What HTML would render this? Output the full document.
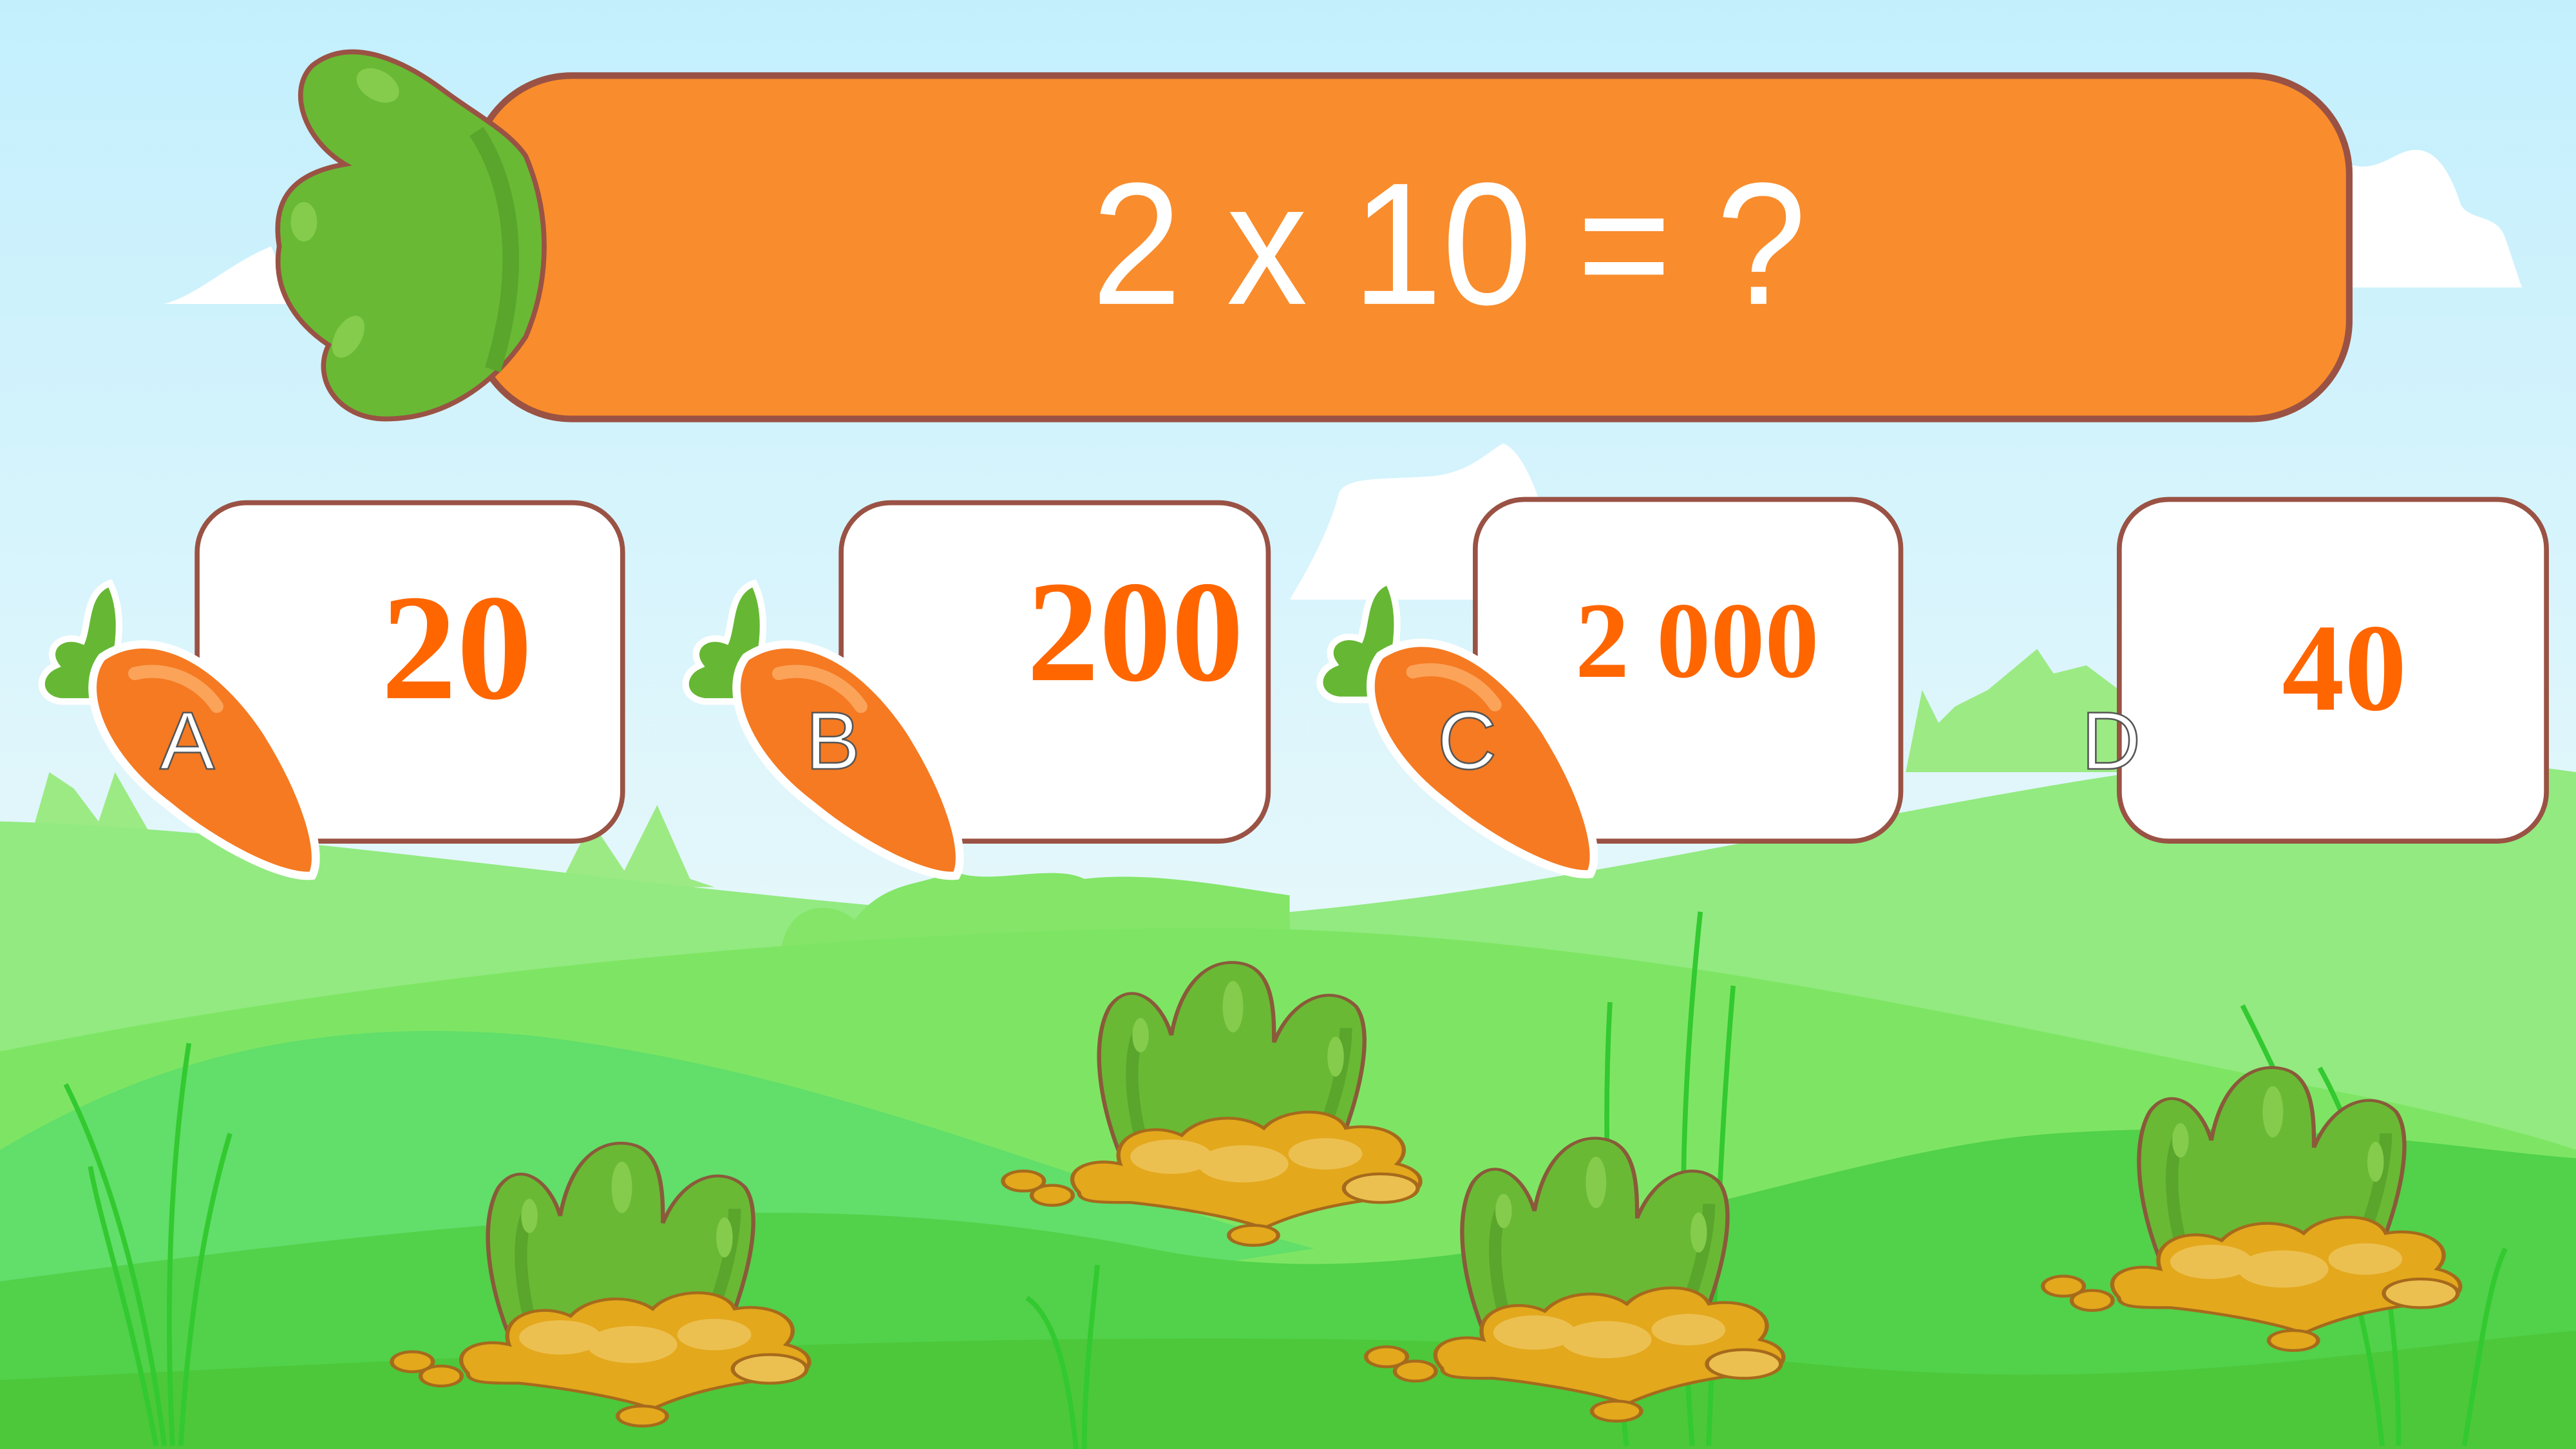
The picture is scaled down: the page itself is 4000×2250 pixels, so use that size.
<!DOCTYPE html>
<html><head><meta charset="utf-8"><style>
html,body{margin:0;padding:0;width:4000px;height:2250px;overflow:hidden;}
svg{display:block;}
</style></head><body>
<svg width="4000" height="2250" viewBox="0 0 1568 882" xmlns="http://www.w3.org/2000/svg">
<defs>
<linearGradient id="sky" x1="0" y1="0" x2="0" y2="1">
<stop offset="0" stop-color="#c3effd"/><stop offset="0.6" stop-color="#e3f7fb"/><stop offset="1" stop-color="#f0fbfa"/>
</linearGradient>
<g id="bush">
<path d="M-60,45 C-75,0 -80,-50 -70,-75 C-60,-95 -45,-80 -40,-55 C-35,-95 -20,-110 -5,-105 C10,-100 10,-70 10,-50 C20,-85 40,-90 50,-75 C60,-55 50,0 35,45 Z" fill="#69b934" stroke="#8a5a3a" stroke-width="2"/>
<path d="M-50,40 C-60,0 -62,-40 -55,-60 M25,40 C40,0 45,-40 45,-60" stroke="#5aa52b" stroke-width="6" fill="none"/>
<ellipse cx="-10" cy="-75" rx="5" ry="18" fill="#85cc4c"/>
<ellipse cx="-55" cy="-55" rx="4" ry="12" fill="#85cc4c"/>
<ellipse cx="40" cy="-40" rx="4" ry="14" fill="#85cc4c"/>
<path d="M-85,55 C-95,40 -80,30 -65,35 C-70,15 -50,5 -35,15 C-25,0 -5,0 5,10 C15,-5 40,-5 45,10 C65,5 80,20 70,35 C85,40 85,55 70,58 C40,62 20,70 5,80 C-10,72 -40,65 -60,62 C-75,62 -85,62 -85,55 Z" fill="#e3a81c" stroke="#a66a1c" stroke-width="2"/>
<ellipse cx="-40" cy="30" rx="20" ry="12" fill="#ecc050"/><ellipse cx="-5" cy="35" rx="22" ry="13" fill="#ecc050"/><ellipse cx="35" cy="28" rx="18" ry="11" fill="#ecc050"/>
<ellipse cx="62" cy="52" rx="18" ry="10" fill="#ecc050" stroke="#a66a1c" stroke-width="2"/>
<ellipse cx="-112" cy="47" rx="10" ry="7" fill="#e3a81c" stroke="#a66a1c" stroke-width="2"/>
<ellipse cx="-98" cy="57" rx="10" ry="7" fill="#e3a81c" stroke="#a66a1c" stroke-width="2"/>
<ellipse cx="0" cy="85" rx="12" ry="7" fill="#e3a81c" stroke="#a66a1c" stroke-width="2"/>
</g>
<g id="carrot">
<path d="M45,0 C30,5 32,25 28,35 C15,30 5,40 12,50 C0,55 0,70 15,72 L40,72 C50,50 55,20 45,0 Z" fill="#66b834" stroke="#fff" stroke-width="4"/>
<path d="M40,45 C70,25 110,45 140,90 C165,130 175,165 168,178 C150,180 110,160 80,135 C40,105 25,65 40,45 Z" fill="#f57a22" stroke="#fff" stroke-width="5"/>
<path d="M60,55 C80,50 100,60 110,75" stroke="#fca35a" stroke-width="8" fill="none" stroke-linecap="round"/>
</g>
</defs>
<rect width="1568" height="882" fill="url(#sky)"/>
<path d="M1430,100 C1445,105 1455,95 1465,92 C1480,88 1490,100 1498,125 C1505,135 1520,130 1525,145 L1535,175 L1430,175 Z" fill="#fff"/>
<path d="M100,185 C120,180 140,160 165,150 L180,185 Z" fill="#fff"/>
<path d="M785,365 C800,340 810,320 815,300 C820,290 840,292 870,290 C895,288 905,275 915,270 C930,275 945,320 950,365 Z" fill="#fff"/>
<path d="M20,505 L30,470 L45,480 L60,500 L70,470 L90,505 Z M340,540 L360,500 L380,530 L400,490 L420,535 L435,540 Z M1160,470 L1170,420 L1180,440 L1190,430 L1210,420 L1240,395 L1250,410 L1270,405 L1290,420 L1290,470 Z" fill="#9cea84"/>
<path d="M0,500 C200,505 500,560 700,560 C900,555 1100,500 1300,470 C1400,455 1500,460 1568,470 L1568,882 L0,882 Z" fill="#92ea80"/>
<path d="M475,580 C480,545 510,550 520,560 C540,535 560,540 580,530 C600,540 640,525 660,535 C700,530 750,540 785,545 L785,600 L475,600 Z" fill="#84e568"/>
<path d="M0,640 C200,600 450,570 700,565 C950,560 1200,620 1400,660 C1480,675 1540,690 1568,700 L1568,882 L0,882 Z" fill="#7ee564"/>
<path d="M0,700 C100,640 200,620 320,630 C500,650 650,720 800,760 L0,882 Z" fill="#62de6a"/>
<path d="M0,780 C300,740 500,720 700,760 C900,800 1100,700 1250,690 C1400,680 1500,700 1568,705 L1568,882 L0,882 Z" fill="#52d14a"/>
<path d="M0,840 C400,820 800,800 1100,830 C1300,850 1450,820 1568,810 L1568,882 L0,882 Z" fill="#4cc83a"/>
<g stroke="#33c930" stroke-width="3" fill="none">
<path d="M100,880 C90,800 70,720 40,660"/><path d="M105,880 C100,780 105,700 115,635"/><path d="M95,880 C80,800 60,740 55,710"/>
<path d="M110,880 C115,800 125,740 140,690"/>
<path d="M655,882 C650,830 640,800 625,790"/><path d="M660,882 C660,840 665,800 668,770"/>
<path d="M1030,880 C1020,750 1025,650 1035,555"/><path d="M1040,880 C1045,760 1048,680 1055,600"/><path d="M990,880 C980,780 975,700 980,610"/>
<path d="M1450,880 C1440,780 1410,700 1365,612"/><path d="M1460,880 C1460,780 1440,700 1412,650"/><path d="M1500,880 C1510,820 1515,780 1525,760"/>
</g>
<use href="#bush" transform="translate(763,678) scale(1.25,0.87)"/>
<use href="#bush" transform="translate(391,788) scale(1.25,0.87)"/>
<use href="#bush" transform="translate(984,785) scale(1.25,0.87)"/>
<use href="#bush" transform="translate(1396,742) scale(1.25,0.87)"/>
<rect x="288" y="46" width="1142" height="209" rx="60" fill="#f98c2c" stroke="#9a5244" stroke-width="4"/>
<path d="M190,40 C215,20 250,40 270,55 C290,70 310,80 320,95 C335,130 335,170 320,205 C300,235 270,255 235,255 C205,255 190,230 200,210 C185,200 165,180 170,150 C165,120 180,105 210,100 C185,85 175,55 190,40 Z" fill="#69b934" stroke="#9a5244" stroke-width="3"/>
<path d="M290,80 C310,110 320,160 300,225" stroke="#5aa52b" stroke-width="10" fill="none"/>
<ellipse cx="230" cy="52" rx="14" ry="9" fill="#85cc4c" transform="rotate(30 230 52)"/>
<ellipse cx="185" cy="135" rx="8" ry="12" fill="#85cc4c"/>
<ellipse cx="212" cy="205" rx="8" ry="14" fill="#85cc4c" transform="rotate(30 212 205)"/>
<text x="882" y="185" text-anchor="middle" font-family="'Liberation Sans',sans-serif" font-size="106" fill="#fff" textLength="435" lengthAdjust="spacingAndGlyphs">2 x 10 = ?</text>
<g fill="#fff" stroke="#9a5244" stroke-width="3">
<rect x="120" y="306" width="259" height="206" rx="30"/>
<rect x="512" y="306" width="260" height="206" rx="30"/>
<rect x="898" y="304" width="259" height="208" rx="30"/>
<rect x="1290" y="304" width="260" height="208" rx="30"/>
</g>
<g font-family="'Liberation Serif',serif" font-weight="bold" fill="#ff6600" text-anchor="middle">
<text x="278" y="425" font-size="92">20</text>
<text x="691" y="414" font-size="88">200</text>
<text x="1033" y="412" font-size="66">2 000</text>
<text x="1427" y="432" font-size="76">40</text>
</g>
<use href="#carrot" transform="translate(22,355)"/>
<use href="#carrot" transform="translate(414,355)"/>
<use href="#carrot" transform="translate(800,354)"/>
<g font-family="'Liberation Sans',sans-serif" font-size="50" fill="#fff" stroke="#555" stroke-width="1" text-anchor="middle">
<text x="114" y="468">A</text>
<text x="507" y="468">B</text>
<text x="893" y="468">C</text>
<text x="1285" y="468">D</text>
</g>
</svg>
</body></html>
